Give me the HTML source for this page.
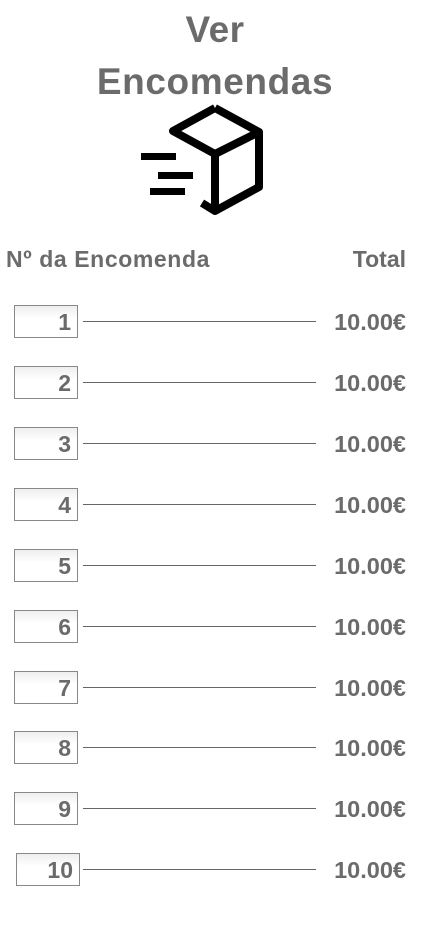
<!DOCTYPE html>
<html><head><meta charset="utf-8"><style>
body{margin:0;width:430px;height:932px;background:#fff;font-family:"Liberation Sans",sans-serif;color:#6b6b6b;position:relative;overflow:hidden}
.t{position:absolute;left:0;width:430px;text-align:center;font-weight:bold;font-size:37px}
.h{position:absolute;top:246px;font-weight:bold;font-size:23px}
.box{position:absolute;left:14px;width:64px;height:33px;border:1px solid #888;box-sizing:border-box;background:linear-gradient(#eee,#fff 40%);text-align:right;font-weight:bold;font-size:23px;line-height:33px;padding-right:6px}
.ln{position:absolute;left:83px;width:233px;height:1px;background:#666}
.p{position:absolute;right:24px;font-weight:bold;font-size:23.5px}
</style></head><body>
<div class="t" style="top:9px;letter-spacing:0.5px">Ver</div>
<div class="t" style="top:61px;letter-spacing:0.6px">Encomendas</div>
<svg style="position:absolute;left:0;top:0" width="430" height="240">
<g fill="none" stroke="#000" stroke-width="8" stroke-linejoin="round">
<path d="M215 108 L259 132 L259 187 L215 211 L202 203"/>
<path d="M215 108 L173 131 L215 154 L259 132"/>
<path d="M215 154 L215 211"/>
</g>
<rect x="141" y="153" width="35" height="7" fill="#000"/>
<rect x="158" y="172" width="35" height="7" fill="#000"/>
<rect x="150" y="188" width="35" height="7" fill="#000"/>
</svg>
<div class="h" style="left:6px;letter-spacing:0.6px">Nº da Encomenda</div>
<div class="h" style="right:24px">Total</div>
<div class="box" style="top:305px">1</div><div class="ln" style="top:321px"></div><div class="p" style="top:309px">10.00€</div>
<div class="box" style="top:366px">2</div><div class="ln" style="top:382px"></div><div class="p" style="top:370px">10.00€</div>
<div class="box" style="top:427px">3</div><div class="ln" style="top:443px"></div><div class="p" style="top:431px">10.00€</div>
<div class="box" style="top:488px">4</div><div class="ln" style="top:504px"></div><div class="p" style="top:492px">10.00€</div>
<div class="box" style="top:549px">5</div><div class="ln" style="top:565px"></div><div class="p" style="top:553px">10.00€</div>
<div class="box" style="top:610px">6</div><div class="ln" style="top:626px"></div><div class="p" style="top:614px">10.00€</div>
<div class="box" style="top:671px">7</div><div class="ln" style="top:687px"></div><div class="p" style="top:675px">10.00€</div>
<div class="box" style="top:731px">8</div><div class="ln" style="top:747px"></div><div class="p" style="top:735px">10.00€</div>
<div class="box" style="top:792px">9</div><div class="ln" style="top:808px"></div><div class="p" style="top:796px">10.00€</div>
<div class="box" style="top:853px;left:16px">10</div><div class="ln" style="top:869px"></div><div class="p" style="top:857px">10.00€</div>
</body></html>
